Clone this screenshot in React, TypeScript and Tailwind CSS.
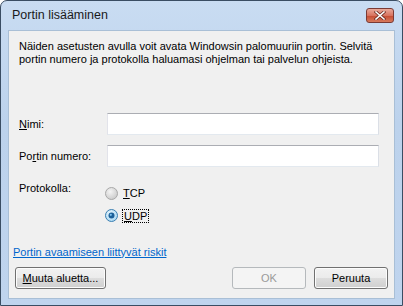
import React from "react";

const font = { fontFamily: '"Liberation Sans", Arial, sans-serif' };

function Radio({ checked }: { checked: boolean }) {
  return (
    <svg width="13" height="13" viewBox="0 0 13 13">
      <defs>
        <radialGradient id={checked ? "rc" : "ru"} cx="0.4" cy="0.35" r="0.7">
          <stop offset="0" stopColor={checked ? "#e8f6fd" : "#f4f4f4"} />
          <stop offset="1" stopColor={checked ? "#a6d6f2" : "#c9c9c9"} />
        </radialGradient>
      </defs>
      <circle cx="6.5" cy="6.5" r="6" fill={`url(#${checked ? "rc" : "ru"})`} stroke={checked ? "#3c7fb1" : "#a8a8a8"} />
      {checked && <circle cx="6.5" cy="6.5" r="3" fill="#1a5f99" />}
      {checked && <circle cx="5.8" cy="5.8" r="1.1" fill="#7ec3ef" />}
    </svg>
  );
}

function Btn({ children, disabled, className }: { children: React.ReactNode; disabled?: boolean; className: string }) {
  return (
    <button
      disabled={disabled}
      className={`h-[22px] rounded-[3px] border text-[11px] ${
        disabled
          ? "border-[#b5b9bc] bg-[#f4f4f4] text-[#9a9a9a]"
          : "border-[#707070] bg-[linear-gradient(#f2f2f2_0%,#ebebeb_50%,#dddddd_51%,#cfcfcf_100%)] text-black shadow-[inset_0_0_0_1px_#fcfcfc]"
      } ${className}`}
    >
      {children}
    </button>
  );
}

export default function App() {
  return (
    <div className="w-[403px] h-[306px] bg-white" style={font}>
      <div className="flex h-full w-full flex-col rounded-t-[7px] border border-[#3a4d63] bg-[linear-gradient(#c9dcf2_0%,#bcd2ec_40%,#bfd4ee_100%)] px-[7px] pb-[6px]">
        <div className="flex h-[29px] items-center justify-between">
          <span className="pl-[4px] text-[12.5px] text-[#1a1a1a]">Portin lisääminen</span>
          <div className="mr-[1px] mt-[-1px] flex h-[15px] w-[28px] items-center justify-center rounded-[3px] border border-[#7a3a34] bg-[linear-gradient(#e9a99a_0%,#d8735f_50%,#c44a31_51%,#d77a5c_100%)]">
            <svg width="12" height="9" viewBox="0 0 12 9">
              <path d="M2 1 L10 8 M10 1 L2 8" stroke="#6b2a20" strokeWidth="3" strokeLinecap="square" />
              <path d="M2 1 L10 8 M10 1 L2 8" stroke="#ffffff" strokeWidth="1.6" strokeLinecap="square" />
            </svg>
          </div>
        </div>
        <div className="flex flex-1 flex-col border border-[#a9bfd6] bg-[#f0f0f0] text-[11px] text-black">
          <p className="pl-[10px] pr-[8px] pt-[9px] leading-[13px]">
            Näiden asetusten avulla voit avata Windowsin palomuuriin portin. Selvitä portin numero ja protokolla haluamasi ohjelman tai palvelun ohjeista.
          </p>
          <div className="mt-[47px] flex items-center pl-[10px]">
            <span className="w-[88px]">
              <u>N</u>imi:
            </span>
            <div className="h-[22px] w-[272px] border border-[#abadb3] border-b-[#e3e9ef] border-l-[#e2e3ea] border-r-[#dbdfe6] bg-white" />
          </div>
          <div className="mt-[10px] flex items-center pl-[10px]">
            <span className="w-[88px]">
              Po<u>r</u>tin numero:
            </span>
            <div className="h-[22px] w-[272px] border border-[#abadb3] border-b-[#e3e9ef] border-l-[#e2e3ea] border-r-[#dbdfe6] bg-white" />
          </div>
          <div className="mt-[12px] flex pl-[10px]">
            <span className="w-[86px] pt-[1px]">Protokolla:</span>
            <div className="flex flex-col gap-[7px] pt-[6px]">
              <div className="flex items-center gap-[4px]">
                <Radio checked={false} />
                <span className="px-[1px]">
                  <u>T</u>CP
                </span>
              </div>
              <div className="flex items-center gap-[4px]">
                <Radio checked />
                <span className="border border-dotted border-black px-[1px] leading-[12px]">
                  <u>U</u>DP
                </span>
              </div>
            </div>
          </div>
          <div className="mt-[21px] pl-[4px]">
            <a className="text-[#0066cc] underline">Portin avaamiseen liittyvät riskit</a>
          </div>
          <div className="mt-[7px] flex items-center pl-[6px] pr-[6px]">
            <Btn className="w-[91px]">
              <u>M</u>uuta aluetta...
            </Btn>
            <div className="flex-1" />
            <Btn disabled className="w-[74px]">
              OK
            </Btn>
            <Btn className="ml-[8px] w-[74px]">Peruuta</Btn>
          </div>
        </div>
      </div>
    </div>
  );
}
